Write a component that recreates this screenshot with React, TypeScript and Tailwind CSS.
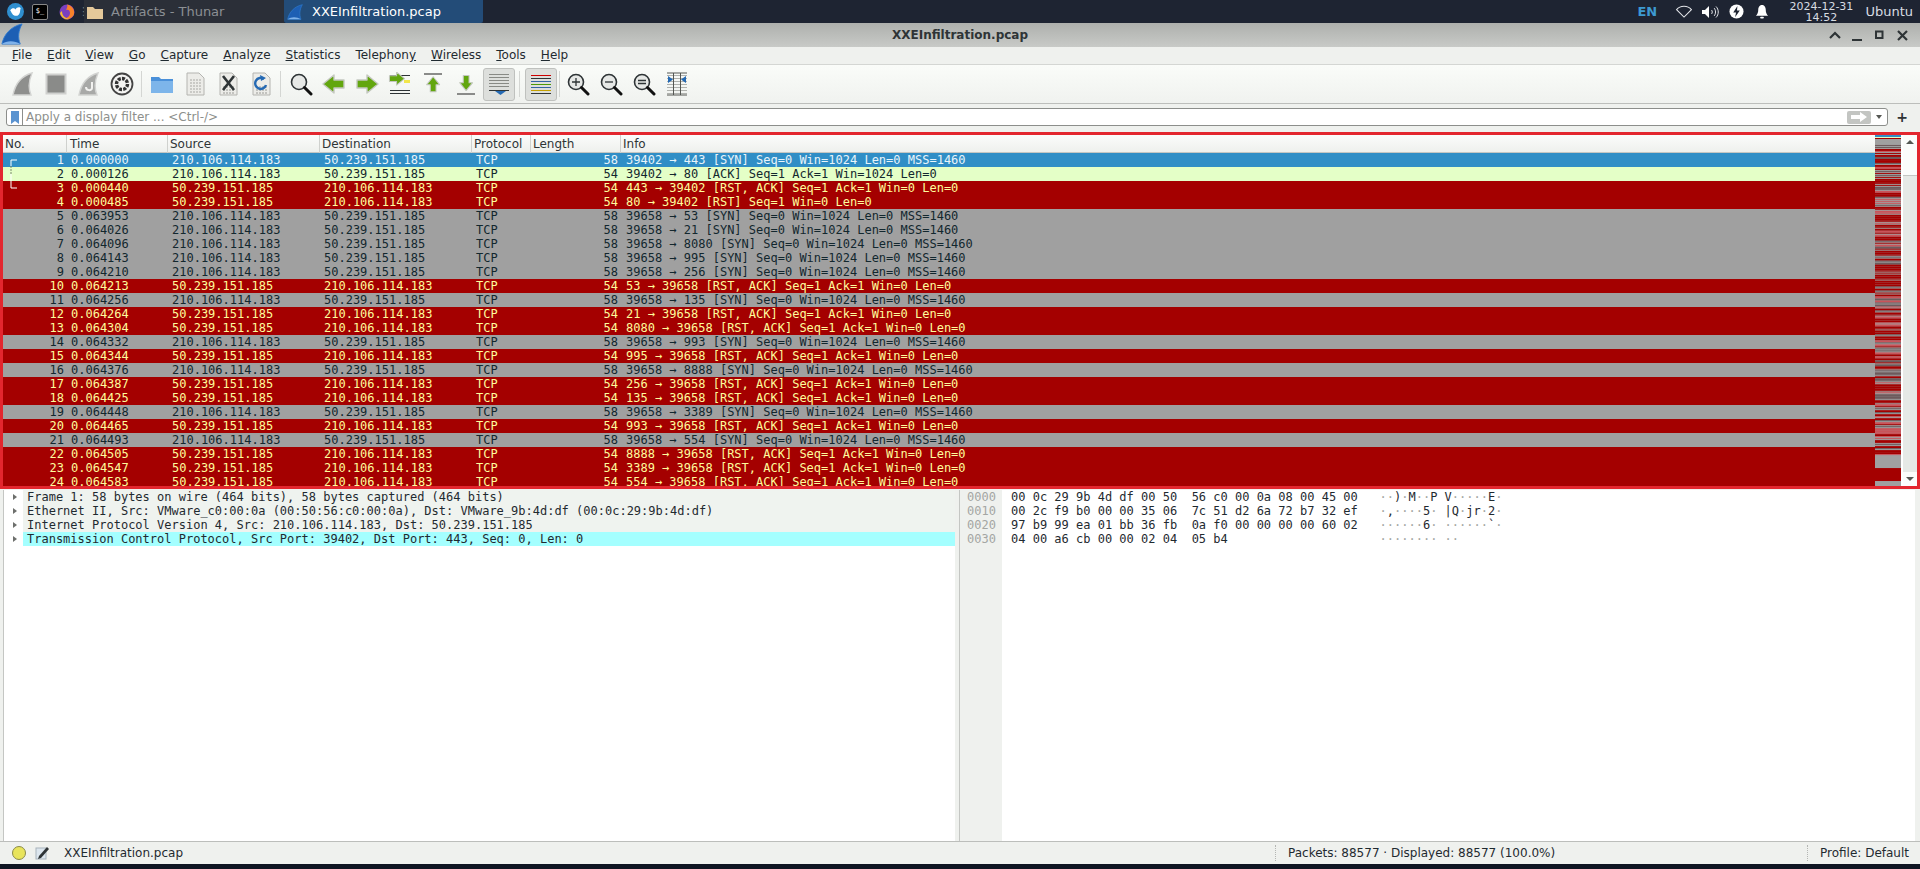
import { ReactNode } from "react";

type Kind = "sel" | "ack" | "rst" | "syn";

interface Packet {
  no: number;
  time: string;
  port: string;
  kind: Kind;
}

const SRC = "210.106.114.183";
const DST = "50.239.151.185";

const packets: Packet[] = [
  { no: 1, time: "0.000000", port: "39402 → 443 [SYN] Seq=0 Win=1024 Len=0 MSS=1460", kind: "sel" },
  { no: 2, time: "0.000126", port: "39402 → 80 [ACK] Seq=1 Ack=1 Win=1024 Len=0", kind: "ack" },
  { no: 3, time: "0.000440", port: "443 → 39402 [RST, ACK] Seq=1 Ack=1 Win=0 Len=0", kind: "rst" },
  { no: 4, time: "0.000485", port: "80 → 39402 [RST] Seq=1 Win=0 Len=0", kind: "rst" },
  { no: 5, time: "0.063953", port: "39658 → 53 [SYN] Seq=0 Win=1024 Len=0 MSS=1460", kind: "syn" },
  { no: 6, time: "0.064026", port: "39658 → 21 [SYN] Seq=0 Win=1024 Len=0 MSS=1460", kind: "syn" },
  { no: 7, time: "0.064096", port: "39658 → 8080 [SYN] Seq=0 Win=1024 Len=0 MSS=1460", kind: "syn" },
  { no: 8, time: "0.064143", port: "39658 → 995 [SYN] Seq=0 Win=1024 Len=0 MSS=1460", kind: "syn" },
  { no: 9, time: "0.064210", port: "39658 → 256 [SYN] Seq=0 Win=1024 Len=0 MSS=1460", kind: "syn" },
  { no: 10, time: "0.064213", port: "53 → 39658 [RST, ACK] Seq=1 Ack=1 Win=0 Len=0", kind: "rst" },
  { no: 11, time: "0.064256", port: "39658 → 135 [SYN] Seq=0 Win=1024 Len=0 MSS=1460", kind: "syn" },
  { no: 12, time: "0.064264", port: "21 → 39658 [RST, ACK] Seq=1 Ack=1 Win=0 Len=0", kind: "rst" },
  { no: 13, time: "0.064304", port: "8080 → 39658 [RST, ACK] Seq=1 Ack=1 Win=0 Len=0", kind: "rst" },
  { no: 14, time: "0.064332", port: "39658 → 993 [SYN] Seq=0 Win=1024 Len=0 MSS=1460", kind: "syn" },
  { no: 15, time: "0.064344", port: "995 → 39658 [RST, ACK] Seq=1 Ack=1 Win=0 Len=0", kind: "rst" },
  { no: 16, time: "0.064376", port: "39658 → 8888 [SYN] Seq=0 Win=1024 Len=0 MSS=1460", kind: "syn" },
  { no: 17, time: "0.064387", port: "256 → 39658 [RST, ACK] Seq=1 Ack=1 Win=0 Len=0", kind: "rst" },
  { no: 18, time: "0.064425", port: "135 → 39658 [RST, ACK] Seq=1 Ack=1 Win=0 Len=0", kind: "rst" },
  { no: 19, time: "0.064448", port: "39658 → 3389 [SYN] Seq=0 Win=1024 Len=0 MSS=1460", kind: "syn" },
  { no: 20, time: "0.064465", port: "993 → 39658 [RST, ACK] Seq=1 Ack=1 Win=0 Len=0", kind: "rst" },
  { no: 21, time: "0.064493", port: "39658 → 554 [SYN] Seq=0 Win=1024 Len=0 MSS=1460", kind: "syn" },
  { no: 22, time: "0.064505", port: "8888 → 39658 [RST, ACK] Seq=1 Ack=1 Win=0 Len=0", kind: "rst" },
  { no: 23, time: "0.064547", port: "3389 → 39658 [RST, ACK] Seq=1 Ack=1 Win=0 Len=0", kind: "rst" },
  { no: 24, time: "0.064583", port: "554 → 39658 [RST, ACK] Seq=1 Ack=1 Win=0 Len=0", kind: "rst" },
];

const rowStyle: Record<Kind, string> = {
  sel: "bg-[#308ec6] text-[#e8f4fb]",
  ack: "bg-[#e4ffc7] text-[#12272e]",
  rst: "bg-[#a40000] text-[#fffc9c]",
  syn: "bg-[#a0a0a0] text-[#12272e]",
};

const menus = ["File", "Edit", "View", "Go", "Capture", "Analyze", "Statistics", "Telephony", "Wireless", "Tools", "Help"];

const hexRows = [
  ["0000", "00 0c 29 9b 4d df 00 50", "56 c0 00 0a 08 00 45 00", "··)·M··P", "V·····E·"],
  ["0010", "00 2c f9 b0 00 00 35 06", "7c 51 d2 6a 72 b7 32 ef", "·,····5·", "|Q·jr·2·"],
  ["0020", "97 b9 99 ea 01 bb 36 fb", "0a f0 00 00 00 00 60 02", "······6·", "······`·"],
  ["0030", "04 00 a6 cb 00 00 02 04", "05 b4", "········", "··"],
];

const tree = [
  "Frame 1: 58 bytes on wire (464 bits), 58 bytes captured (464 bits)",
  "Ethernet II, Src: VMware_c0:00:0a (00:50:56:c0:00:0a), Dst: VMware_9b:4d:df (00:0c:29:9b:4d:df)",
  "Internet Protocol Version 4, Src: 210.106.114.183, Dst: 50.239.151.185",
  "Transmission Control Protocol, Src Port: 39402, Dst Port: 443, Seq: 0, Len: 0",
];

function Fin({ blue = false, className = "" }: { blue?: boolean; className?: string }) {
  return (
    <svg viewBox="0 0 24 24" className={className}>
      <path
        d="M1 23C3 13 10 4 23 1C19 8 18 16 21 23Z"
        fill={blue ? "#1d5fb4" : "#9a9a98"}
        stroke={blue ? "#2f7bd0" : "#d8d8d6"}
        strokeWidth="1"
      />
      {blue && <path d="M1 23C6 19 15 19 21 23Z" fill="#7fb2ea" />}
    </svg>
  );
}

function Arrow({ dir }: { dir: "left" | "right" | "up" | "down" }) {
  const rotate = { right: 0, down: 90, left: 180, up: 270 }[dir];
  return (
    <g transform={`rotate(${rotate} 12 12)`}>
      <path d="M2 8H12V3L23 12L12 21V16H2Z" fill="#62a60e" stroke="#c4c8c0" strokeWidth="1.4" strokeLinejoin="round" />
    </g>
  );
}

function Lines({ y, color = "#2e3436" }: { y: number[]; color?: string }) {
  return (
    <>
      {y.map((v) => (
        <rect key={v} x="2" y={v} width="20" height="1" fill={color} />
      ))}
    </>
  );
}

function Magnifier({ sign }: { sign?: "+" | "-" | "=" }) {
  return (
    <>
      <circle cx="10" cy="10" r="7.5" fill="#e6e8e6" stroke="#2e3436" strokeWidth="1.6" />
      <path d="M15.5 15.5L22 22" stroke="#111" strokeWidth="3" strokeLinecap="round" />
      {sign === "+" && <path d="M6 10H14M10 6V14" stroke="#2e3436" strokeWidth="1.3" />}
      {sign === "-" && <path d="M6 10H14" stroke="#2e3436" strokeWidth="1.3" />}
      {sign === "=" && <path d="M6 8.5H14M6 11.5H14" stroke="#2e3436" strokeWidth="1.3" />}
    </>
  );
}

function FilePage({ children }: { children?: ReactNode }) {
  return (
    <>
      <path d="M4 1H16L21 6V23H4Z" fill="#ecece8" stroke="#b4b4b0" />
      <path d="M7 15H18M7 18H18M7 21H18" stroke="#9a9a96" strokeWidth="1" strokeDasharray="2 1" />
      {children}
    </>
  );
}

function Tool({ children, active = false }: { children: ReactNode; active?: boolean }) {
  return (
    <div className="flex h-[34px] w-[33px] shrink-0 items-center justify-center">
      <div
        className={`flex h-[33px] w-[32px] items-center justify-center rounded-[3px] ${
          active ? "border border-[#bfc1be] bg-[#dddfdc]" : ""
        }`}
      >
        <svg viewBox="0 0 24 24" className="h-6 w-6">
          {children}
        </svg>
      </div>
    </div>
  );
}

function Sep({ w = "w-[7px]" }: { w?: string }) {
  return (
    <div className={`flex h-[26px] shrink-0 justify-center ${w}`}>
      <div className="h-full w-px bg-[#d4d6d3]" />
    </div>
  );
}

function Minimap() {
  const bars: ReactNode[] = [];
  let seed = 7;
  for (let y = 10; y < 322; y += 2) {
    seed = (seed * 75 + 74) % 65537;
    const r = seed % 10;
    const fill = r < 5 ? "#a40000" : r < 7 ? "#c9545a" : "#6d5a5c";
    bars.push(<rect key={y} x="0" y={y} width="26" height={r % 2 === 0 ? 2 : 1} fill={fill} />);
  }
  return (
    <svg viewBox="0 0 26 352" preserveAspectRatio="none" className="h-full w-[26px] shrink-0 bg-[#a0a0a0]">
      <rect x="0" y="0" width="26" height="2" fill="#308ec6" />
      <rect x="0" y="2" width="26" height="1" fill="#e4ffc7" />
      <rect x="0" y="3" width="26" height="1" fill="#a40000" />
      {bars}
      <rect x="0" y="334" width="26" height="13" fill="#a40000" />
    </svg>
  );
}

function ScrollBar() {
  return (
    <div className="ml-[2px] flex w-[14px] shrink-0 flex-col bg-[#e6e9e6]">
      <div className="flex h-[14px] items-center justify-center bg-[#fbfcfb]">
        <div className="h-0 w-0 border-x-[4px] border-b-[4px] border-x-transparent border-b-[#555753]" />
      </div>
      <div className="h-[27px] border-b border-[#c4c6c3] bg-[#fbfcfb]" />
      <div className="flex-1" />
      <div className="flex h-[14px] items-center justify-center bg-[#fbfcfb]">
        <div className="h-0 w-0 border-x-[4px] border-t-[4px] border-x-transparent border-t-[#555753]" />
      </div>
    </div>
  );
}

export default function App() {
  return (
    <div className="flex h-[869px] w-[1920px] flex-col overflow-hidden bg-[#eff1ee] font-['DejaVu_Sans',sans-serif] text-[12px] text-[#1f2a30]">
      {/* desktop panel */}
      <div className="flex h-[23px] shrink-0 items-center bg-[#1e2432] text-[#d8dce2]">
        <div className="flex w-[30px] justify-center">
          <svg viewBox="0 0 16 16" className="h-[17px] w-[17px]">
            <circle cx="8" cy="8" r="8" fill="#2f8fd0" />
            <path d="M3 7C5 4 7 5 8 6C9 4 12 3 13 5C12 6 13 9 11 11C9 13 6 12 5 10C4 9 4 8 3 7Z" fill="#fff" />
          </svg>
        </div>
        <div className="flex w-[20px] justify-center">
          <div className="flex h-[16px] w-[16px] items-center justify-center rounded-[2px] border border-[#888] bg-black font-['DejaVu_Sans_Mono',monospace] text-[7px] text-white">
            $_
          </div>
        </div>
        <div className="ml-[8px] flex w-[18px] justify-center">
          <svg viewBox="0 0 16 16" className="h-[16px] w-[16px]">
            <circle cx="8" cy="8" r="7.5" fill="#7a3fc0" />
            <path d="M8 .5C13 1 16 6 15 10C14 14 9 16 5 15C7 14 11 13 11 9C11 6 9 5 7 6C8 4 9 2 8 .5Z" fill="#f9822a" />
            <path d="M1 9C2 13 6 16 10 15C6 14 3 12 3 7Z" fill="#f5c02e" />
          </svg>
        </div>
        <span className="ml-[2px] w-[5px] text-[11px] leading-none text-[#777]">⋮</span>
        <div className="ml-[1px] flex h-[23px] w-[200px] items-center bg-[#2b2f38]">
          <svg viewBox="0 0 16 14" className="ml-[3px] h-[14px] w-[16px]">
            <path d="M0 2H6L8 4H16V14H0Z" fill="#e4c89a" />
          </svg>
          <span className="ml-[8px] text-[13px] text-[#8b8f94]">Artifacts - Thunar</span>
        </div>
        <div className="flex h-[23px] w-[199px] items-center rounded-b-[2px] bg-[#234c78]">
          <Fin blue className="ml-[3px] h-[16px] w-[16px]" />
          <span className="ml-[9px] text-[13px] text-white">XXEInfiltration.pcap</span>
        </div>
        <div className="flex-1" />
        <span className="w-[34px] text-[13px] font-bold text-[#3d9ad1]">EN</span>
        <div className="flex w-[26px] justify-center">
          <svg viewBox="0 0 18 14" className="h-[13px] w-[18px]">
            <path d="M1 5C5 0 13 0 17 5L9 13Z" fill="none" stroke="#e4e6ea" strokeWidth="1.1" />
          </svg>
        </div>
        <div className="flex w-[26px] justify-center">
          <svg viewBox="0 0 18 14" className="h-[14px] w-[18px]">
            <path d="M1 5H4L8 1V13L4 9H1Z" fill="#fff" />
            <path d="M10.5 5C11.5 6 11.5 8 10.5 9M13 3C15 5 15 9 13 11M15 1.5C18 4.5 18 9.5 15 12.5" fill="none" stroke="#e4e6ea" />
          </svg>
        </div>
        <div className="flex w-[26px] justify-center">
          <svg viewBox="0 0 16 16" className="h-[15px] w-[15px]">
            <circle cx="8" cy="8" r="7.5" fill="#fff" />
            <path d="M9 2L4.5 9H7.5L6.5 14L11.5 7H8.5Z" fill="#1e2432" />
          </svg>
        </div>
        <div className="flex w-[26px] justify-center">
          <svg viewBox="0 0 14 16" className="h-[15px] w-[14px]">
            <path d="M7 1C10 1 11 4 11 6C11 9 12 11 13.5 12.5H.5C2 11 3 9 3 6C3 4 4 1 7 1Z" fill="#fff" />
            <rect x="5" y="13.5" width="4" height="2" rx="1" fill="#fff" />
          </svg>
        </div>
        <div className="ml-[9px] flex w-[74px] flex-col items-center text-[11px] leading-[11px]">
          <span>2024-12-31</span>
          <span>14:52</span>
        </div>
        <span className="ml-[7px] mr-[7px] text-[13px]">Ubuntu</span>
      </div>

      {/* title bar */}
      <div className="relative flex h-[24px] shrink-0 items-center justify-center bg-gradient-to-b from-[#aeb0ad] to-[#c8cac7]">
        <Fin blue className="absolute left-[1px] top-0 h-[22px] w-[22px]" />
        <span className="font-bold text-[#2e3436]">XXEInfiltration.pcap</span>
        <div className="absolute right-[6px] top-0 flex h-full items-center">
          <svg viewBox="0 0 88 14" className="h-[14px] w-[88px]">
            <path d="M4 10L9 5L14 10" fill="none" stroke="#2e3436" strokeWidth="2.2" />
            <path d="M26 12H36" stroke="#2e3436" strokeWidth="2" />
            <rect x="50" y="3.5" width="6.5" height="6.5" fill="none" stroke="#2e3436" strokeWidth="2" />
            <path d="M72 3L81 12M81 3L72 12" stroke="#2e3436" strokeWidth="2.2" />
          </svg>
        </div>
      </div>

      {/* menu bar */}
      <div className="flex h-[18px] shrink-0 items-center gap-[15px] border-b border-[#d4d6d3] pl-[12px] pb-[1px]">
        {menus.map((m) =>
          m === "Telephony" ? (
            <span key={m}>
              Telephon<span className="underline">y</span>
            </span>
          ) : (
            <span key={m}>
              <span className="underline">{m[0]}</span>
              {m.slice(1)}
            </span>
          ),
        )}
      </div>

      {/* main toolbar */}
      <div className="flex h-[39px] shrink-0 items-center border-b border-[#bcbebb] bg-gradient-to-b from-[#fafcf9] to-[#f0f2ef] pl-[6px]">
        <Tool>
          <path d="M2 23C4 13 10 4 21 1C18 8 17 16 20 23Z" fill="#8e8f8d" stroke="#d2d3d1" strokeWidth="1.4" />
        </Tool>
        <Tool>
          <rect x="2.5" y="2.5" width="19" height="19" fill="#8a8b89" stroke="#cfd0ce" strokeWidth="2" />
        </Tool>
        <Tool>
          <path d="M2 23C4 13 10 4 21 1C18 8 17 16 20 23Z" fill="#a8a9a7" stroke="#d2d3d1" strokeWidth="1.4" />
          <path d="M15 10V16C15 19 9 19 9 15" fill="none" stroke="#f2f2f0" strokeWidth="2" />
        </Tool>
        <Tool>
          <circle cx="12" cy="12" r="10.5" fill="#f4f4f2" stroke="#444" strokeWidth="1.8" />
          <circle cx="12" cy="12" r="5.5" fill="none" stroke="#333" strokeWidth="3.4" strokeDasharray="3 1.2" />
        </Tool>
        <Sep />
        <Tool>
          <path d="M1 5H9L11 7H23V21H1Z" fill="#4a90d9" />
          <path d="M1 9H23V21H1Z" fill="#7db5ea" />
        </Tool>
        <Tool>
          <path d="M4 1H16L21 6V23H4Z" fill="#ecece8" stroke="#b4b4b0" />
          <path d="M7 8H18M7 11H18M7 14H18M7 17H18M7 20H18" stroke="#a8a8a4" strokeDasharray="2 1" />
        </Tool>
        <Tool>
          <FilePage>
            <path d="M7 4L18 18M18 4L7 18" stroke="#2e3436" strokeWidth="2.6" />
          </FilePage>
        </Tool>
        <Tool>
          <FilePage>
            <path d="M15 7A5.5 5.5 0 1 0 17 13" fill="none" stroke="#2469b3" strokeWidth="2.4" />
            <path d="M11 3L17 6L12 9Z" fill="#2469b3" />
          </FilePage>
        </Tool>
        <Sep />
        <Tool>
          <Magnifier />
        </Tool>
        <Tool>
          <Arrow dir="left" />
        </Tool>
        <Tool>
          <Arrow dir="right" />
        </Tool>
        <Tool>
          <Lines y={[3, 18, 21]} />
          <rect x="16" y="8" width="6" height="3" fill="#f2e64a" />
          <g transform="translate(0 -2) scale(.72)">
            <Arrow dir="right" />
          </g>
        </Tool>
        <Tool>
          <rect x="3" y="1" width="18" height="2" fill="#8a8b89" />
          <g transform="translate(3.5 4) scale(.72)">
            <Arrow dir="up" />
          </g>
        </Tool>
        <Tool>
          <rect x="3" y="21" width="18" height="2" fill="#8a8b89" />
          <g transform="translate(3.5 2) scale(.72)">
            <Arrow dir="down" />
          </g>
        </Tool>
        <Tool active>
          <Lines y={[2, 5, 8, 11, 14]} color="#888a85" />
          <rect x="2" y="18" width="20" height="1" fill="#2e3436" />
          <path d="M8 19H19L13.5 23Z" fill="#2469b3" />
        </Tool>
        <Sep w="w-[9px]" />
        <Tool active>
          <rect x="2" y="3" width="20" height="1" fill="#cc0000" />
          <rect x="2" y="6" width="20" height="1" fill="#2e3436" />
          <rect x="2" y="9" width="20" height="1" fill="#3465a4" />
          <rect x="2" y="12" width="20" height="1" fill="#4e9a06" />
          <rect x="2" y="15" width="20" height="1" fill="#3465a4" />
          <rect x="2" y="18" width="20" height="1" fill="#c4a000" />
          <rect x="2" y="21" width="20" height="1" fill="#2e3436" />
        </Tool>
        <Sep w="w-[4px]" />
        <Tool>
          <Magnifier sign="+" />
        </Tool>
        <Tool>
          <Magnifier sign="-" />
        </Tool>
        <Tool>
          <Magnifier sign="=" />
        </Tool>
        <Tool>
          <Lines y={[3, 6, 9, 12, 15, 18, 21]} color="#b0b2ae" />
          <path d="M8.5 1V23M15.5 1V23" stroke="#555753" />
          <path d="M2 1H22M2 23H22" stroke="#555753" />
          <path d="M3 4L8 7.5L3 11ZM21 4L16 7.5L21 11Z" fill="#2469b3" />
        </Tool>
      </div>

      {/* display filter */}
      <div className="flex h-[28px] shrink-0 items-center pb-[2px] pl-[6px] pr-[12px]">
        <div className="flex h-[18px] flex-1 items-center rounded-[3px] border border-[#8c8e8b] bg-white">
          <div className="flex h-full w-[16px] items-center justify-center border-r border-[#8c8e8b]">
            <svg viewBox="0 0 8 13" className="h-[13px] w-[8px]">
              <path d="M0 0H8V13L4 10L0 13Z" fill="#5a93d0" />
            </svg>
          </div>
          <span className="ml-[3px] text-[#8d8f8c]">Apply a display filter ... &lt;Ctrl-/&gt;</span>
          <div className="flex-1" />
          <div className="flex h-[13px] w-[24px] items-center justify-center rounded-[2px] bg-[#c3c5c2]">
            <svg viewBox="0 0 18 10" className="h-[10px] w-[18px]">
              <path d="M1 3H10V0L17 5L10 10V7H1Z" fill="#fff" />
            </svg>
          </div>
          <div className="mx-[5px] h-0 w-0 border-x-[3.5px] border-t-[4px] border-x-transparent border-t-[#555753]" />
        </div>
        <span className="ml-[8px] text-[14px] font-bold leading-none text-[#2e3436]">+</span>
      </div>

      {/* packet list, outlined in red */}
      <div className="flex h-[357px] shrink-0 border-[3px] border-[#e3262e] bg-white">
        <div className="relative flex min-w-0 flex-1 flex-col overflow-hidden">
          <div className="flex h-[18px] shrink-0 items-center border-b border-[#c4c6c3] bg-gradient-to-b from-[#fbfcfb] to-[#eef0ed] text-[#2e3436]">
            <span className="w-[64px] border-r border-[#cfd1ce] pl-[2px]">No.</span>
            <span className="w-[101px] border-r border-[#cfd1ce] pl-[3px]">Time</span>
            <span className="w-[152px] border-r border-[#cfd1ce] pl-[2px]">Source</span>
            <span className="w-[152px] border-r border-[#cfd1ce] pl-[2px]">Destination</span>
            <span className="w-[59px] border-r border-[#cfd1ce] pl-[2px]">Protocol</span>
            <span className="w-[90px] border-r border-[#cfd1ce] pl-[2px]">Length</span>
            <span className="pl-[2px]">Info</span>
          </div>
          <div className="flex-1 overflow-hidden font-['DejaVu_Sans_Mono',monospace]">
            {packets.map((p) => {
              const out = p.kind === "rst";
              return (
                <div key={p.no} className={`flex h-[14px] items-center whitespace-pre leading-[14px] ${rowStyle[p.kind]}`}>
                  <span className="w-[61px] text-right">{p.no}</span>
                  <span className="ml-[7px] w-[101px]">{p.time}</span>
                  <span className="w-[152px]">{out ? DST : SRC}</span>
                  <span className="w-[152px]">{out ? SRC : DST}</span>
                  <span className="w-[59px]">TCP</span>
                  <span className="w-[83px] text-right">{p.kind === "sel" || p.kind === "syn" ? 58 : 54}</span>
                  <span className="ml-[8px]">{p.port}</span>
                </div>
              );
            })}
          </div>
          <svg viewBox="0 0 12 30" className="absolute left-[7px] top-[24px] h-[30px] w-[12px]">
            <path d="M7 1H1V7" fill="none" stroke="#fff" />
            <path d="M1 7V15" fill="none" stroke="#7a8a70" strokeDasharray="2 1" />
            <path d="M1 15V29H7" fill="none" stroke="#fff" />
          </svg>
        </div>
        <Minimap />
        <ScrollBar />
      </div>

      {/* details and bytes */}
      <div className="flex min-h-0 flex-1 border-b border-[#bcbebb] pl-[3px] pr-[5px] pt-[1px]">
        <div className="w-[952px] shrink-0 border-l border-[#c4c6c3] bg-white pl-[4px] font-['DejaVu_Sans_Mono',monospace]">
          {tree.map((t, i) => (
            <div key={t} className="flex h-[14px] items-center whitespace-pre">
              <div className="ml-[5px] h-0 w-0 border-y-[3.5px] border-l-[4px] border-y-transparent border-l-[#6d6f6c]" />
              <span className={`ml-[6px] flex-1 pl-[4px] leading-[14px] ${i === 3 ? "bg-[#a4ffff]" : "bg-[#eff3ef]"}`}>{t}</span>
            </div>
          ))}
        </div>
        <div className="ml-[4px] flex min-w-0 flex-1 border-l border-[#c4c6c3] font-['DejaVu_Sans_Mono',monospace]">
          <div className="w-[42px] shrink-0 bg-[#eff1ee] pl-[7px] text-[#a4a6a3]">
            {hexRows.map((r) => (
              <div key={r[0]} className="h-[14px] leading-[14px]">
                {r[0]}
              </div>
            ))}
          </div>
          <div className="flex-1 bg-white pl-[9px]">
            {hexRows.map((r) => (
              <div key={r[0]} className="h-[14px] whitespace-pre leading-[14px]">
                {r[1]}  {r[2].padEnd(23, " ")}   <Ascii text={r[3]} /> <Ascii text={r[4]} />
              </div>
            ))}
          </div>
        </div>
      </div>

      {/* status bar */}
      <div className="flex h-[22px] shrink-0 items-center text-[#1f2a30]">
        <div className="ml-[12px] h-[14px] w-[14px] rounded-full border border-[#8a8a4a] bg-[#e8e45c]" />
        <svg viewBox="0 0 14 14" className="ml-[9px] h-[14px] w-[14px]">
          <rect x="1" y="2" width="10" height="11" fill="#dce6ee" stroke="#a8b4bc" />
          <path d="M4 10L12 1L14 3L6 12L3 13Z" fill="#2e3436" />
        </svg>
        <span className="ml-[15px]">XXEInfiltration.pcap</span>
        <div className="flex-1" />
        <div className="h-[16px] border-l border-dotted border-[#b4b6b3]" />
        <span className="ml-[12px] w-[519px]">Packets: 88577 · Displayed: 88577 (100.0%)</span>
        <div className="h-[16px] border-l border-dotted border-[#b4b6b3]" />
        <span className="ml-[12px] mr-[11px]">Profile: Default</span>
      </div>
      <div className="h-[5px] shrink-0 bg-[#0f1522]" />
    </div>
  );
}

function Ascii({ text }: { text: string }) {
  return (
    <>
      {text.split("").map((c, i) => (
        <span key={i} className={c === "·" ? "text-[#a4a6a3]" : ""}>
          {c}
        </span>
      ))}
    </>
  );
}
